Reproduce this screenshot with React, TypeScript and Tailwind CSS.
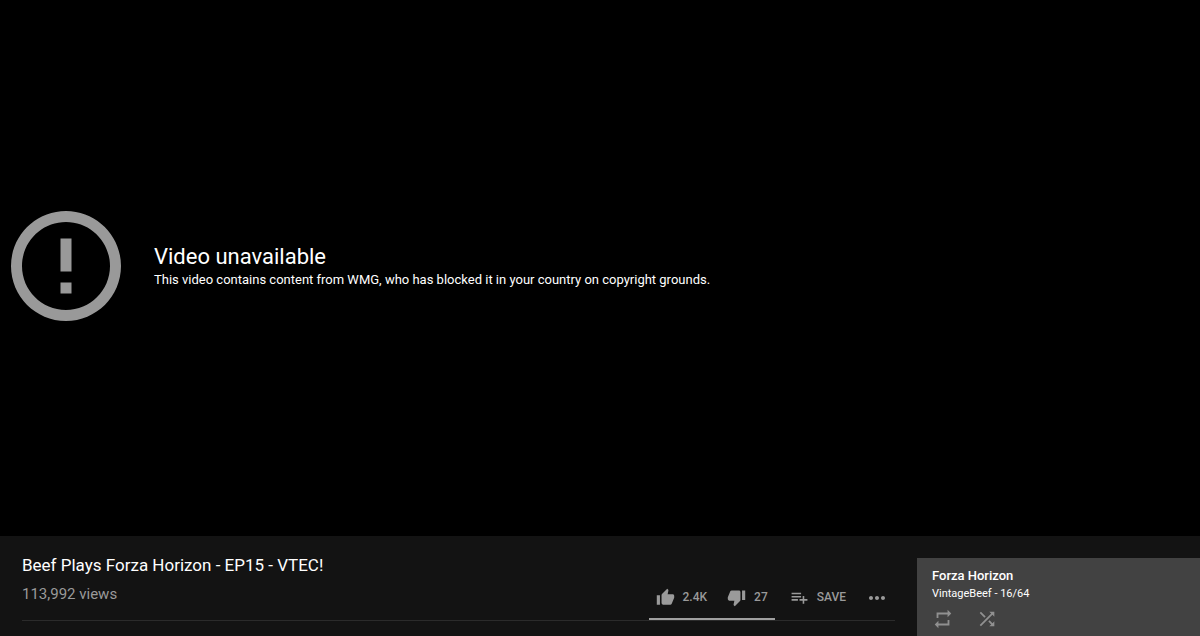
import type { ButtonHTMLAttributes, ReactNode } from "react";
import { clsx } from "clsx";

interface IconProps {
  path: string;
  className?: string;
}

const ICONS = {
  error:
    "M11 15h2v2h-2zm0-8h2v6h-2zm.99-5C6.47 2 2 6.48 2 12s4.47 10 9.99 10C17.52 22 22 17.52 22 12S17.52 2 11.99 2zM12 20c-4.42 0-8-3.58-8-8s3.58-8 8-8 8 3.58 8 8-3.58 8-8 8z",
  like: "M1 21h4V9H1v12zm22-11c0-1.1-.9-2-2-2h-6.31l.95-4.57.03-.32c0-.41-.17-.79-.44-1.06L14.17 1 7.59 7.59C7.22 7.95 7 8.45 7 9v10c0 1.1.9 2 2 2h9c.83 0 1.54-.5 1.84-1.22l3.02-7.05c.09-.23.14-.47.14-.73v-2z",
  dislike:
    "M15 3H6c-.83 0-1.54.5-1.84 1.22l-3.02 7.05c-.09.23-.14.47-.14.73v2c0 1.1.9 2 2 2h6.31l-.95 4.57-.03.32c0 .41.17.79.44 1.06L9.83 23l6.59-6.59c.36-.36.58-.86.58-1.41V5c0-1.1-.9-2-2-2zm4 0v12h4V3h-4z",
  save: "M14 10H2v2h12v-2zm0-4H2v2h12V6zm4 8v-4h-2v4h-4v2h4v4h2v-4h4v-2h-4zM2 16h8v-2H2v2z",
  more: "M6 10c-1.1 0-2 .9-2 2s.9 2 2 2 2-.9 2-2-.9-2-2-2zm12 0c-1.1 0-2 .9-2 2s.9 2 2 2 2-.9 2-2-.9-2-2-2zm-6 0c-1.1 0-2 .9-2 2s.9 2 2 2 2-.9 2-2-.9-2-2-2z",
  repeat: "M7 7h10v3l4-4-4-4v3H5v6h2V7zm10 10H7v-3l-4 4 4 4v-3h12v-6h-2v4z",
  shuffle:
    "M10.59 9.17L5.41 4 4 5.41l5.17 5.17 1.42-1.41zM14.5 4l2.04 2.04L4 18.59 5.41 20 17.96 7.46 20 9.5V4h-5.5zm.33 9.41l-1.41 1.41 3.13 3.13L14.5 20H20v-5.5l-2.04 2.04-3.13-3.13z",
};

function Icon({ path, className }: IconProps) {
  return (
    <svg viewBox="0 0 24 24" fill="currentColor" aria-hidden="true" className={clsx("shrink-0", className)}>
      <path d={path} />
    </svg>
  );
}

interface ActionButtonProps extends ButtonHTMLAttributes<HTMLButtonElement> {
  icon: string;
  children: ReactNode;
}

function ActionButton({ icon, children, ...rest }: ActionButtonProps) {
  return (
    <button className="flex items-center gap-2 text-xs leading-5 font-medium hover:text-white" {...rest}>
      <Icon path={icon} className="size-[19px]" />
      {children}
    </button>
  );
}

function Player() {
  return (
    <section className="flex flex-1 items-center bg-black pb-1">
      <Icon path={ICONS.error} className="size-[132px] text-[#999999]" />
      <div className="ml-[22px]">
        <h2 className="text-[22px] leading-7">Video unavailable</h2>
        <p className="text-[13px] leading-[18px]">
          This video contains content from WMG, who has blocked it in your country on copyright grounds.
        </p>
      </div>
    </section>
  );
}

function VideoInfo() {
  return (
    <section className="min-w-0 flex-1 pt-[17px]">
      <h1 className="text-[17px] leading-6">Beef Plays Forza Horizon - EP15 - VTEC!</h1>
      <div className="flex items-start justify-between border-b border-[#2b2b2b] text-[#9a9a9a]">
        <p className="pt-[7px] text-[15px] leading-5">113,992 views</p>
        <div className="flex items-start">
          <div className="flex gap-5 border-b-2 border-[#a0a0a0] px-[7px] pt-2.5 pb-[11px]">
            <ActionButton icon={ICONS.like} aria-label="Like">
              2.4K
            </ActionButton>
            <ActionButton icon={ICONS.dislike} aria-label="Dislike">
              27
            </ActionButton>
          </div>
          <div className="flex gap-5 px-[15px] pt-2.5">
            <ActionButton icon={ICONS.save}>SAVE</ActionButton>
          </div>
          <button aria-label="More actions" className="mr-1.5 ml-1 pt-[9px] hover:text-white">
            <Icon path={ICONS.more} className="size-6" />
          </button>
        </div>
      </div>
    </section>
  );
}

function Playlist() {
  return (
    <aside className="mt-[22px] w-[283px] shrink-0 bg-[#424242] px-[15px] pt-2">
      <h3 className="text-[13px] leading-5 font-medium">Forza Horizon</h3>
      <p className="text-[11px] leading-4">VintageBeef - 16/64</p>
      <div className="flex gap-[22px] pt-1.5 text-[#909090]">
        <button aria-label="Loop playlist" className="hover:text-white">
          <Icon path={ICONS.repeat} className="size-[22px]" />
        </button>
        <button aria-label="Shuffle playlist" className="hover:text-white">
          <Icon path={ICONS.shuffle} className="size-[22px]" />
        </button>
      </div>
    </aside>
  );
}

export default function App() {
  return (
    <main className="flex min-h-screen flex-col bg-[#131313] font-['Roboto',sans-serif] text-white">
      <Player />
      <div className="flex min-h-[100px] gap-[22px] pl-[22px]">
        <VideoInfo />
        <Playlist />
      </div>
    </main>
  );
}
